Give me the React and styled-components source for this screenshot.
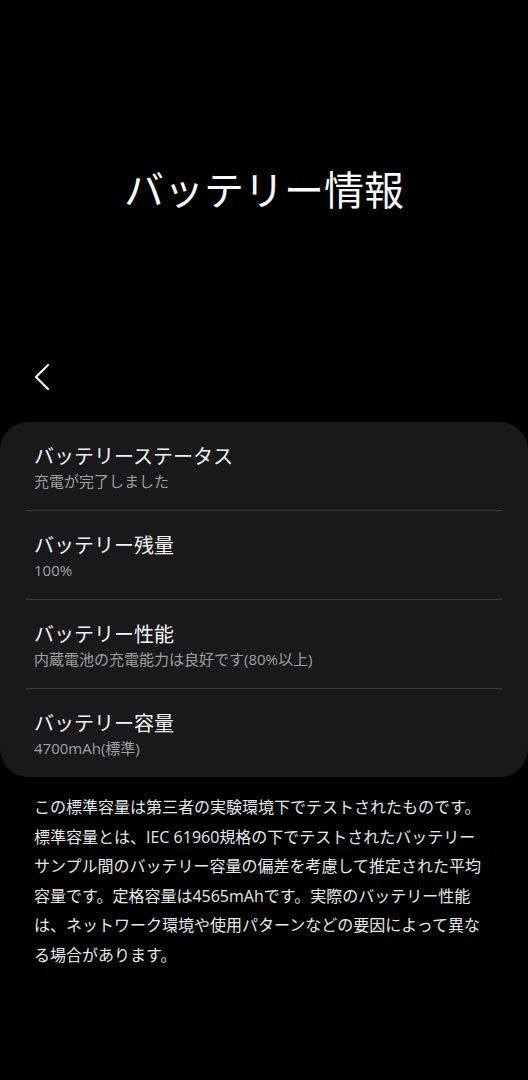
import React from 'react';
import styled, { createGlobalStyle } from 'styled-components';

const GlobalStyle = createGlobalStyle`
  html, body {
    margin: 0;
    padding: 0;
    background: #000;
  }
  body {
    font-family: "Open Sans", "Noto Sans CJK JP", sans-serif;
    color: #f2f2f2;
  }
`;

const Page = styled.div`
  width: 528px;
  min-height: 1080px;
  background: #000;
  display: flex;
  flex-direction: column;
`;

const Heading = styled.h1`
  margin: 166px 0 0;
  font-size: 40px;
  line-height: 48px;
  font-weight: 400;
  text-align: center;
  color: #fafafa;
`;

const TopBar = styled.div`
  margin-top: 135px;
  height: 56px;
  display: flex;
  align-items: center;
  padding-left: 30px;
`;

const BackButton = styled.button`
  width: 28px;
  height: 36px;
  padding: 0;
  border: none;
  background: none;
  display: flex;
  align-items: center;
  justify-content: center;
`;

const Card = styled.div`
  margin-top: 17px;
  background: #19191b;
  border-radius: 28px;
  padding: 0 26px;
`;

const Row = styled.div`
  padding: 22px 8px 18px;
  border-top: ${(p) => (p.first ? 'none' : '1px solid #3a3a3c')};
`;

const RowTitle = styled.div`
  font-size: 20px;
  line-height: 26px;
  color: #f4f4f4;
`;

const RowSub = styled.div`
  font-size: 15px;
  line-height: 22px;
  color: #a0a0a0;
`;

const Note = styled.p`
  margin: 16px 0 0;
  padding: 0 34px;
  font-size: 16px;
  line-height: 29.6px;
  color: #e8e8e8;
  white-space: nowrap;
`;

const rows = [
  { title: 'バッテリーステータス', sub: '充電が完了しました' },
  { title: 'バッテリー残量', sub: '100%' },
  { title: 'バッテリー性能', sub: '内蔵電池の充電能力は良好です(80%以上)' },
  { title: 'バッテリー容量', sub: '4700mAh(標準)' },
];

export default function App() {
  return (
    <Page>
      <GlobalStyle />
      <Heading>バッテリー情報</Heading>
      <TopBar>
        <BackButton aria-label="戻る">
          <svg width="20" height="28" viewBox="0 0 20 28" fill="none">
            <path d="M14 2 L2 14 L14 26" stroke="#f2f2f2" strokeWidth="2.2" strokeLinecap="round" strokeLinejoin="round" />
          </svg>
        </BackButton>
      </TopBar>
      <Card>
        {rows.map((r, i) => (
          <Row key={r.title} first={i === 0}>
            <RowTitle>{r.title}</RowTitle>
            <RowSub>{r.sub}</RowSub>
          </Row>
        ))}
      </Card>
      <Note>
        この標準容量は第三者の実験環境下でテストされたものです。<br />
        標準容量とは、IEC 61960規格の下でテストされたバッテリー<br />
        サンプル間のバッテリー容量の偏差を考慮して推定された平均<br />
        容量です。定格容量は4565mAhです。実際のバッテリー性能<br />
        は、ネットワーク環境や使用パターンなどの要因によって異な<br />
        る場合があります。
      </Note>
    </Page>
  );
}
